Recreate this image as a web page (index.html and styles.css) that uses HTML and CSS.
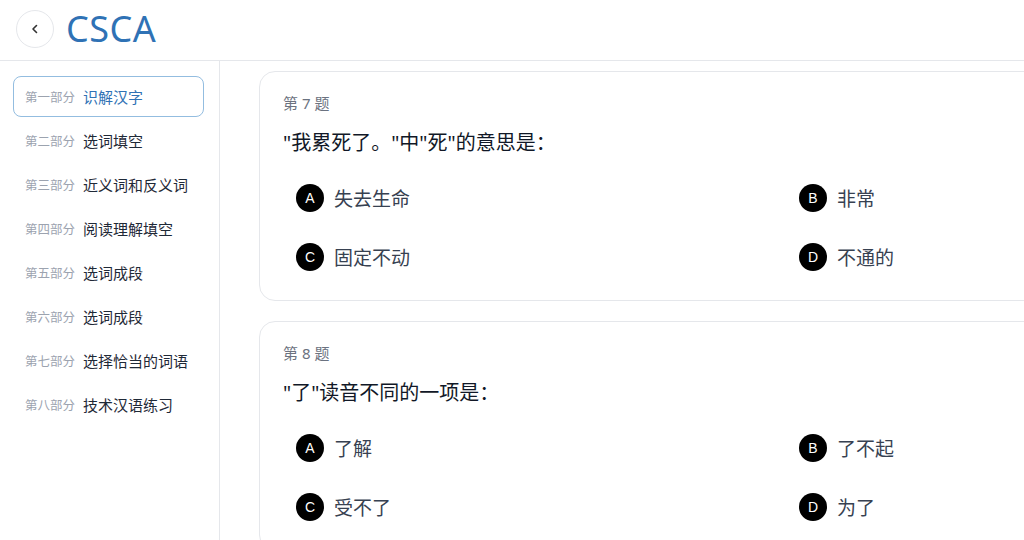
FILE: index.html
```html
<!DOCTYPE html>
<html lang="zh">
<head>
<meta charset="utf-8">
<title>CSCA</title>
<link rel="stylesheet" href="styles.css">
</head>
<body>
<header class="topbar">
  <button class="back" aria-label="返回">
    <svg width="16" height="16" viewBox="0 0 16 16"><path d="M9.5 4.5 6 8l3.5 3.5" fill="none" stroke="#333" stroke-width="1.6" stroke-linecap="round" stroke-linejoin="round"/></svg>
  </button>
  <h1 class="brand">CSCA</h1>
</header>
<div class="layout">
  <nav class="sidebar">
    <a class="nav-item active"><span class="part">第一部分</span><span class="name">识解汉字</span></a>
    <a class="nav-item"><span class="part">第二部分</span><span class="name">选词填空</span></a>
    <a class="nav-item"><span class="part">第三部分</span><span class="name">近义词和反义词</span></a>
    <a class="nav-item"><span class="part">第四部分</span><span class="name">阅读理解填空</span></a>
    <a class="nav-item"><span class="part">第五部分</span><span class="name">选词成段</span></a>
    <a class="nav-item"><span class="part">第六部分</span><span class="name">选词成段</span></a>
    <a class="nav-item"><span class="part">第七部分</span><span class="name">选择恰当的词语</span></a>
    <a class="nav-item"><span class="part">第八部分</span><span class="name">技术汉语练习</span></a>
  </nav>
  <main class="content">
    <section class="card">
      <div class="q-num">第 7 题</div>
      <div class="q-text">"我累死了。"中"死"的意思是：</div>
      <div class="options">
        <div class="option"><span class="badge">A</span><span class="opt-text">失去生命</span></div>
        <div class="option"><span class="badge">B</span><span class="opt-text">非常</span></div>
        <div class="option"><span class="badge">C</span><span class="opt-text">固定不动</span></div>
        <div class="option"><span class="badge">D</span><span class="opt-text">不通的</span></div>
      </div>
    </section>
    <section class="card">
      <div class="q-num">第 8 题</div>
      <div class="q-text">"了"读音不同的一项是：</div>
      <div class="options">
        <div class="option"><span class="badge">A</span><span class="opt-text">了解</span></div>
        <div class="option"><span class="badge">B</span><span class="opt-text">了不起</span></div>
        <div class="option"><span class="badge">C</span><span class="opt-text">受不了</span></div>
        <div class="option"><span class="badge">D</span><span class="opt-text">为了</span></div>
      </div>
    </section>
  </main>
</div>
</body>
</html>
```
FILE: styles.css
```css
* { box-sizing: border-box; }
html, body { margin: 0; height: 100%; }
body {
  font-family: "Noto Sans", "Noto Sans CJK SC", sans-serif;
  background: #fff;
  color: #1f2937;
  overflow: hidden;
}
.topbar {
  height: 61px;
  display: flex;
  align-items: center;
  padding: 0 0 2px 16px;
  gap: 13px;
  border-bottom: 1px solid #e5e7eb;
  background: #fff;
}
.back {
  width: 38px;
  height: 38px;
  border-radius: 50%;
  border: 1px solid #e5e7eb;
  background: #fff;
  display: flex;
  align-items: center;
  justify-content: center;
  padding: 0;
}
.brand {
  margin: 0 0 0 -1px;
  font-size: 36px;
  font-weight: 400;
  color: #2f72b5;
  letter-spacing: 0.5px;
  line-height: 1;
}
.layout {
  display: flex;
  height: calc(100% - 61px);
}
.sidebar {
  width: 220px;
  flex: none;
  border-right: 1px solid #e5e7eb;
  padding: 15px 15px 0 13px;
  display: flex;
  flex-direction: column;
  gap: 3px;
}
.nav-item {
  height: 41px;
  display: flex;
  align-items: center;
  gap: 8px;
  padding-left: 11px;
  border: 1px solid transparent;
  border-radius: 8px;
}
.nav-item.active {
  border-color: #93bde0;
}
.part {
  font-size: 12.5px;
  color: #9ca3af;
}
.name {
  font-size: 15px;
  color: #1f2937;
}
.nav-item.active .name { color: #2f72b5; }
.content {
  flex: 1;
  overflow: hidden;
  padding: 10px 0 0 39px;
  display: flex;
  flex-direction: column;
  gap: 20px;
}
.card {
  width: 1038px;
  flex: none;
  border: 1px solid #e5e7eb;
  border-radius: 16px;
  padding: 21px 23px 21px;
  background: #fff;
}
.q-num {
  font-size: 15px;
  line-height: 20px;
  color: #6b7280;
}
.q-text {
  margin-top: 18px;
  font-size: 20px;
  line-height: 24px;
  color: #111827;
}
.options {
  margin-top: 21px;
  display: grid;
  grid-template-columns: 1fr 1fr;
  column-gap: 16px;
  row-gap: 15px;
}
.option {
  height: 44px;
  display: flex;
  align-items: center;
  gap: 10px;
  padding-left: 13px;
}
.badge {
  width: 28px;
  height: 28px;
  border-radius: 50%;
  background: #000;
  color: #fff;
  font-family: "Liberation Sans", sans-serif;
  font-size: 14px;
  display: flex;
  align-items: center;
  justify-content: center;
}
.opt-text {
  font-size: 19px;
  color: #374151;
}
```
